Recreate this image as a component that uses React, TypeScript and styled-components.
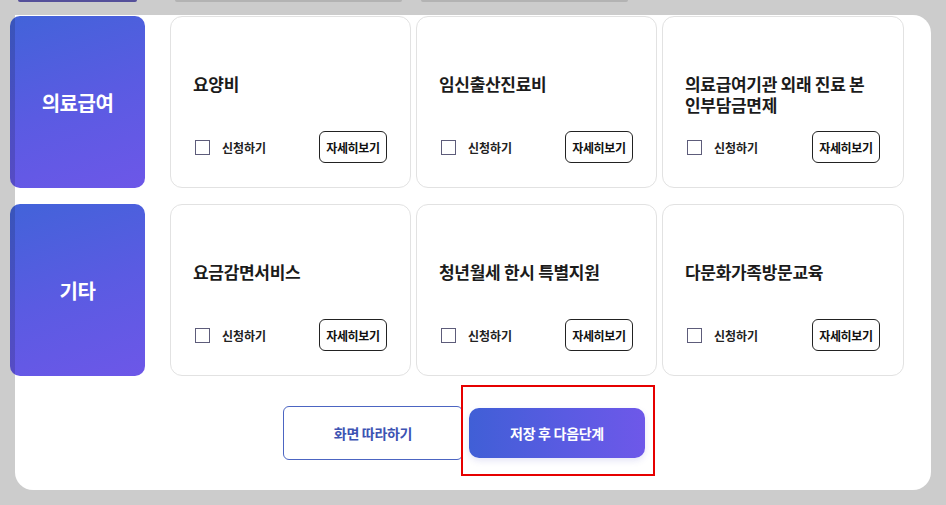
import React from "react";
import styled, { createGlobalStyle } from "styled-components";

const Global = createGlobalStyle`
  html, body { margin: 0; padding: 0; background: #cccccc; }
  body { font-family: "Noto Sans CJK KR", "Noto Sans", sans-serif; }
  * { box-sizing: border-box; }
`;

const Page = styled.div`
  width: 946px;
  height: 505px;
  overflow: hidden;
  background: #cccccc;
`;

const TopStrip = styled.div`
  height: 15px;
  position: relative;
`;

const Remnant = styled.div<{ $left: number; $width: number; $color: string }>`
  position: absolute;
  top: 0;
  left: ${(p) => p.$left}px;
  width: ${(p) => p.$width}px;
  height: 1.5px;
  border-radius: 0 0 3px 3px;
  background: ${(p) => p.$color};
`;

const Panel = styled.div`
  margin-left: 15px;
  width: 916px;
  height: 475px;
  background: #ffffff;
  border-radius: 0 18px 18px 18px;
  padding-top: 1px;
  display: flex;
  flex-direction: column;
  gap: 16px;
`;

const Row = styled.div`
  display: flex;
  height: 172px;
  margin-left: -5px;
`;

const Category = styled.div`
  position: relative;
  width: 135px;
  flex: none;
  border-radius: 10px;
  background: linear-gradient(160deg, #4263d9 0%, #5a5be2 50%, #6d57e8 100%);
  display: flex;
  align-items: center;
  justify-content: center;
  color: #ffffff;
  font-size: 20px;
  font-weight: 700;
  letter-spacing: -0.5px;
  overflow: hidden;
  &::before {
    content: "";
    position: absolute;
    left: 0;
    top: 0;
    bottom: 0;
    width: 5px;
    background: rgba(0, 0, 0, 0.14);
  }
`;

const Cards = styled.div`
  display: flex;
  gap: 5px;
  margin-left: 25px;
`;

const Card = styled.div<{ $w: number }>`
  width: ${(p) => p.$w}px;
  height: 172px;
  border: 1px solid #e2e2e2;
  border-radius: 12px;
  padding: 56px 23px 24px 22px;
  display: flex;
  flex-direction: column;
`;

const Title = styled.div`
  font-size: 17px;
  font-weight: 700;
  line-height: 21px;
  color: #1b1b1b;
  letter-spacing: -0.3px;
`;

const Bottom = styled.div`
  margin-top: auto;
  display: flex;
  align-items: center;
  justify-content: space-between;
`;

const Check = styled.label`
  display: flex;
  align-items: center;
  gap: 12px;
  font-size: 12px;
  font-weight: 600;
  color: #222;
  padding-left: 2px;
`;

const Box = styled.span`
  width: 15px;
  height: 15px;
  border: 1.5px solid #5d5c7a;
  background: #fff;
`;

const Detail = styled.button`
  width: 68px;
  height: 32px;
  border: 1px solid #222;
  border-radius: 6px;
  background: #fff;
  font-family: inherit;
  font-size: 12px;
  font-weight: 600;
  color: #111;
  padding: 0;
  letter-spacing: -0.3px;
`;

const Actions = styled.div`
  margin-top: 14px;
  display: flex;
  justify-content: center;
  padding-right: 18px;
  align-items: center;
`;

const Outline = styled.button`
  width: 180px;
  height: 54px;
  border: 1px solid #4c65c2;
  border-radius: 6px;
  background: #fff;
  color: #3c53b3;
  font-family: inherit;
  font-size: 14px;
  font-weight: 700;
  letter-spacing: -0.3px;
`;

const Spot = styled.div`
  position: relative;
  margin-left: 6px;
`;

const Highlight = styled.div`
  position: absolute;
  left: -8px;
  top: -23px;
  width: 194px;
  height: 91px;
  border: 2px solid #e60000;
  background: #fff;
`;

const Primary = styled.button`
  position: relative;
  width: 176px;
  height: 50px;
  border: none;
  border-radius: 10px;
  background: linear-gradient(90deg, #405fd6 0%, #5a5be2 55%, #6e58e9 100%);
  box-shadow: 0 3px 6px rgba(90, 90, 200, 0.15);
  color: #fff;
  font-family: inherit;
  font-size: 14px;
  font-weight: 700;
  letter-spacing: -0.3px;
`;

type Item = { title: React.ReactNode };
const rows: { cat: string; items: Item[] }[] = [
  {
    cat: "의료급여",
    items: [
      { title: "요양비" },
      { title: "임신출산진료비" },
      { title: <>의료급여기관 외래 진료 본<br />인부담금면제</> },
    ],
  },
  {
    cat: "기타",
    items: [
      { title: "요금감면서비스" },
      { title: "청년월세 한시 특별지원" },
      { title: "다문화가족방문교육" },
    ],
  },
];

const widths = [241, 241, 242];

export default function App() {
  return (
    <Page>
      <Global />
      <TopStrip>
        <Remnant $left={18} $width={119} $color="#55509a" />
        <Remnant $left={175} $width={227} $color="#b3b3b3" />
        <Remnant $left={421} $width={207} $color="#b3b3b3" />
      </TopStrip>
      <Panel>
        {rows.map((r) => (
          <Row key={r.cat}>
            <Category>{r.cat}</Category>
            <Cards>
              {r.items.map((it, i) => (
                <Card key={i} $w={widths[i]}>
                  <Title>{it.title}</Title>
                  <Bottom>
                    <Check>
                      <Box />
                      신청하기
                    </Check>
                    <Detail>자세히보기</Detail>
                  </Bottom>
                </Card>
              ))}
            </Cards>
          </Row>
        ))}
        <Actions>
          <Outline>화면 따라하기</Outline>
          <Spot>
            <Highlight />
            <Primary>저장 후 다음단계</Primary>
          </Spot>
        </Actions>
      </Panel>
    </Page>
  );
}
